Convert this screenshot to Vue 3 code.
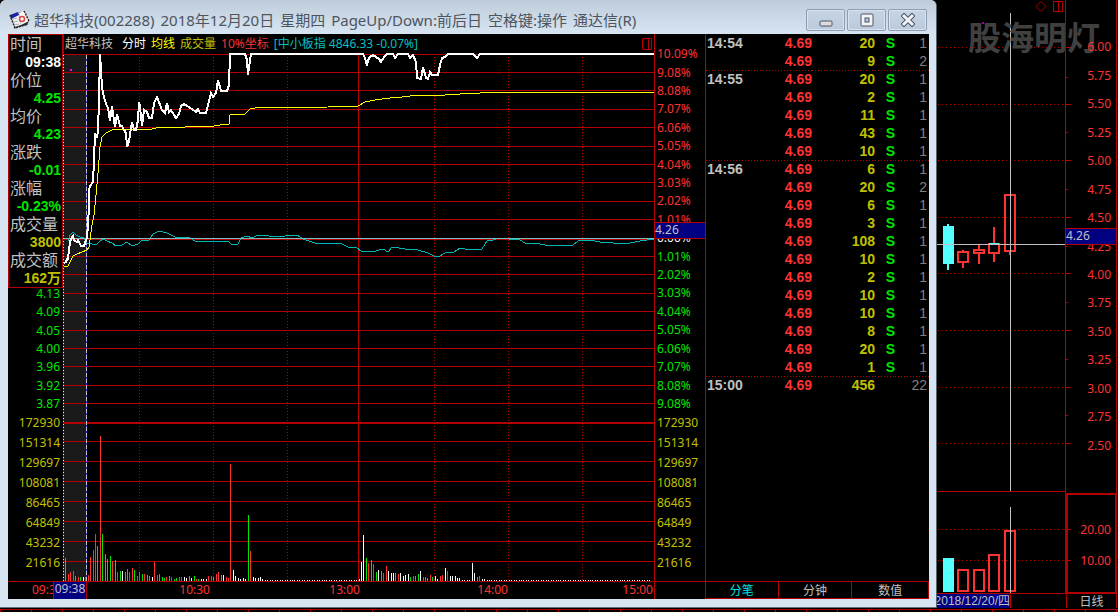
<script setup>
const titleParts = ['超华科技(002288)', '2018年12月20日', '星期四', 'PageUp/Down:前后日', '空格键:操作', '通达信(R)']
const info = [
  ['时间', '09:38', 'white'],
  ['价位', '4.25', 'green'],
  ['均价', '4.23', 'green'],
  ['涨跌', '-0.01', 'green'],
  ['涨幅', '-0.23%', 'green'],
  ['成交量', '3800', 'olive'],
  ['成交额', '162万', 'olive'],
]
const prices = ['4.13', '4.09', '4.05', '4.00', '3.96', '3.92', '3.87']
const volumes = ['172930', '151314', '129697', '108081', '86465', '64849', '43232', '21616']
const gains = ['10.09%', '9.08%', '8.08%', '7.07%', '6.06%', '5.05%', '4.04%', '3.03%', '2.02%', '1.01%']
const losses = ['1.01%', '2.02%', '3.03%', '4.04%', '5.05%', '6.06%', '7.07%', '8.08%', '9.08%']
const scale = [
  ...gains.map((text) => ({ text, tone: 'red' })),
  { text: '0.00%', tone: 'white' },
  ...losses.map((text) => ({ text, tone: 'green' })),
]

const priceRows = [54, 72, 90, 109, 127, 146, 164, 182, 201, 219, 239, 256, 274, 293, 311, 330, 348, 366, 385, 403]
const volumeRows = [441, 461, 481, 501, 521, 541, 561, 581]
const dottedCols = [139, 213, 287, 434, 508, 582]

const priceLine = '64,263 66,262 67,259 68,259 69,250 70,242 71,239 73,236 74,240 75,241 77,242 78,240 80,244 81,246 84,246 85,243 86,240 87,238 88,225 89,205 89,190 90,186 93,182 94,160 95,133 97,138 98,130 99,100 100,54 101,70 102,87 104,97 106,104 108,108 110,121 112,106 114,121 115,127 117,114 119,122 120,126 122,126 124,130 126,133 127,147 129,141 131,128 132,122 134,130 136,130 138,120 139,102 140,107 142,126 144,110 147,112 149,118 152,118 154,103 157,97 159,102 162,110 165,113 167,103 169,112 171,110 174,115 176,118 179,114 181,106 184,104 187,106 192,109 196,112 198,109 200,113 206,113 208,105 211,93 213,97 216,93 218,80 221,91 227,91 229,85 230,54 245,54 247,60 248,75 250,60 251,54 363,54 365,58 367,66 368,60 370,57 373,55 376,57 379,59 381,62 384,57 387,54 393,54 395,58 398,54 408,54 410,58 413,55 416,62 417,78 421,79 423,67 426,78 428,79 430,72 432,75 438,75 440,65 442,58 445,57 448,54 473,54 477,58 480,54 654,54'
const averageLine = '64,266 68,266 70,262 73,256 77,254 82,252 87,250 89,247 90,240 92,225 94,215 96,195 98,173 100,147 102,137 106,133 112,130 120,129 135,130 152,129 160,127 185,127 214,126 220,125 229,124 230,115 245,114 250,109 255,108 328,107 358,106 365,102 375,100 390,98 402,97 418,95 445,95 460,94 480,93 485,92 654,92'
const indexLine = '68,241 70,235 73,232 76,235 80,237 84,238 87,243 92,244 96,245 100,241 103,239 107,241 112,243 116,246 122,245 127,242 132,246 138,244 142,240 149,240 153,234 159,231 167,233 175,237 190,238 195,241 220,241 229,242 232,245 238,244 241,238 247,236 252,238 258,235 280,237 290,235 297,235 303,239 315,243 340,243 348,247 357,248 361,251 372,252 383,249 388,252 392,247 405,249 418,250 428,253 434,256 440,256 445,253 454,252 460,248 470,250 482,249 487,241 493,240 498,238 520,240 525,243 540,244 550,246 573,245 578,241 590,240 600,242 625,244 640,241 654,239'

const quiet = (count) => Array(count).fill('w1').join(' ')
const minuteVolumes = [
  'g23 r7 r9 r10 g5 r4 g4 w4 r4 r6 r24 r31 r47 g35 r145 g47 g27 g22 g25 r20 g21 r9 g10 w10 g9 g12 r9 r13 g11 r5',
  'r9 g7 r7 g6 g5 w4 r19 r6 g7 g4 g3 r4 g5 r4 g2 g3 r4 r4 w4 w3 g5 w3 g5 r2 g2 w2 w2 w2 r5 r5',
  'g4 r7 r9 g6 w6 r4 r3 r117 w11 w5 w3 w2 w3 w2 g66 r30 w4 w3 w3 w4 w2',
  quiet(38),
  'w2 w19 w46 g23 r18 g21 r17 g9 w11 g10 r8 r15 w10 w8 w8 g8 r7 w8 w5 w6 w7 g4 r5 g5 g7 w10 r4 g4 g3 r6 g4',
  'w5 w2 r5 r6 w13 r10 w5 w5 w5 w3 w3 w1 w1 w1 w1 w18 w8 g4 r5 w2 w2',
  quiet(67),
].join(' ').split(' ')
const barColors = { r: '#ff3232', g: '#00e600', w: '#ffffff' }
const bars = minuteVolumes.map((code, i) => ({
  x: Math.round(63 + (i + 1) * 2.4625),
  h: Number(code.slice(1)),
  fill: barColors[code[0]],
}))

const deals = [
  ['14:54', 20, 'S', 1], ['', 9, 'S', 2],
  ['14:55', 20, 'S', 1], ['', 2, 'S', 1], ['', 11, 'S', 1], ['', 43, 'S', 1], ['', 10, 'S', 1],
  ['14:56', 6, 'S', 1], ['', 20, 'S', 2], ['', 6, 'S', 1], ['', 3, 'S', 1], ['', 108, 'S', 1],
  ['', 10, 'S', 1], ['', 2, 'S', 1], ['', 10, 'S', 1], ['', 10, 'S', 1], ['', 8, 'S', 1],
  ['', 20, 'S', 1], ['', 1, 'S', 1],
  ['15:00', 456, '', 22],
]

const dayScale = ['6.00', '5.75', '5.50', '5.25', '5.00', '4.75', '4.50', '4.25', '4.00', '3.75', '3.50', '3.25', '3.00', '2.75', '2.50']
const dayRows = [47, 104, 160, 217, 273, 330, 387, 443, 529, 560]
const dayTicks = [77, 132, 189, 246, 302, 359, 415, 545]
const candles = [
  { x: 958, top: 251, bottom: 263, high: 250, low: 268, vol: 569 },
  { x: 974, top: 249, bottom: 254, high: 245, low: 264, vol: 569 },
  { x: 989, top: 243, bottom: 254, high: 227, low: 262, vol: 554 },
  { x: 1005, top: 194, bottom: 252, high: 194, low: 255, vol: 530 },
]
</script>

<template>
  <main class="screen">
    <section class="window">
      <header class="titlebar">
        <svg class="app-icon" width="22" height="20" viewBox="0 0 22 20">
          <path d="M1 5L13 2L20 11L18 15L6 18Z" fill="#30303a" />
          <path d="M1 5L10 3L12 15L6 17Z" fill="#f4f2ef" />
          <path d="M10 3L15 1L20 11L12 15Z" fill="#fff8f3" />
          <path d="M1 5L9 2L10 5L2 9Z" fill="#1724a5" />
          <path d="M4 9L8 8M5 12L9 11M6 15L10 14" stroke="#a8b0bb" />
          <circle cx="13" cy="9" r="2.5" fill="none" stroke="#dc4545" stroke-width="1.5" />
          <path d="M1 5L6 18L19 14M15 1L20 11" fill="none" stroke="#292929" stroke-width="1.5" stroke-dasharray="2 1" />
        </svg>
        <h1><span v-for="part in titleParts" :key="part">{{ part }}</span></h1>
        <div class="controls">
          <button type="button" aria-label="最小化">
            <svg width="14" height="14" viewBox="0 0 14 14"><rect x="1" y="8" width="12" height="5" rx="1" fill="#ddd" stroke="#4e5568" /></svg>
          </button>
          <button type="button" aria-label="最大化">
            <svg width="14" height="14" viewBox="0 0 14 14"><rect x="1" y="1" width="12" height="12" rx="1" fill="#f1f2f3" stroke="#4e5568" /><rect x="5" y="5" width="4" height="4" fill="#b9c9dc" stroke="#4e5568" /></svg>
          </button>
          <button type="button" aria-label="关闭">
            <svg width="14" height="14" viewBox="0 0 14 14"><path d="M3 3L11 11M11 3L3 11" stroke="#4e5568" stroke-width="5" stroke-linecap="square" /><path d="M3 3L11 11M11 3L3 11" stroke="#f1f2f3" stroke-width="3" stroke-linecap="square" /></svg>
          </button>
        </div>
      </header>

      <div class="body">
        <aside class="left">
          <dl class="info">
            <template v-for="row in info" :key="row[0]">
              <dt>{{ row[0] }}</dt>
              <dd :class="row[2]">{{ row[1] }}</dd>
            </template>
          </dl>
          <ul class="labels price green"><li v-for="p in prices" :key="p">{{ p }}</li></ul>
          <ul class="labels volume olive"><li v-for="v in volumes" :key="v">{{ v }}</li></ul>
          <div class="foot start">09:30</div>
        </aside>

        <section class="chart">
          <div class="legend">
            <span class="grey name">超华科技</span>
            <span class="white">分时</span>
            <span class="yellow">均线</span>
            <span class="olive">成交量</span>
            <span class="red">10%坐标</span>
            <span class="cyan">[中小板指 4846.33 -0.07%]</span>
            <svg class="pane-icon" width="10" height="12" viewBox="0 0 10 12"><path d="M.5 .5H9.5V11.5H.5ZM6.5 .5V11.5" fill="none" stroke="#b40000" /></svg>
          </div>
          <svg class="plot" viewBox="63 54 592 528" preserveAspectRatio="none" shape-rendering="crispEdges">
            <rect x="64" y="54" width="22" height="527" fill="#1a1a1a" />
            <g fill="#b40000">
              <rect v-for="y in priceRows" :key="y" x="64" :y="y" width="590" height="1" />
              <rect x="64" y="422" width="590" height="2" />
              <rect v-for="y in volumeRows" :key="y" x="63" :y="y" width="592" height="1" />
              <rect x="358" y="54" width="1" height="527" />
              <rect x="654" y="34" width="1" height="565" />
            </g>
            <path v-for="x in dottedCols" :key="x" :d="`M${x + 0.5} 57V581`" stroke="#b40000" stroke-dasharray="1 2" />
            <path d="M63.5 34V581" stroke="#b40000" />
            <path d="M63.5 55V581" stroke="#ffff32" stroke-dasharray="1 2" />
            <path d="M86.5 55V581" stroke="#3232c8" />
            <path d="M86.5 55V581" stroke="#c0c0c0" stroke-dasharray="4 2" />
            <rect x="70" y="69" width="2" height="2" fill="#ff00ff" />
            <rect v-for="b in bars" :key="b.x" :x="b.x" :y="581 - b.h" width="1" :height="b.h" :fill="b.fill" />
            <polyline :points="indexLine" fill="none" stroke="#00b8b8" />
            <rect x="64" y="238" width="590" height="1" fill="#78bebe" />
            <polyline :points="averageLine" fill="none" stroke="#ffff00" />
            <polyline :points="priceLine" fill="none" stroke="#ffffff" stroke-width="2" />
          </svg>
          <div class="foot times red">
            <span>10:30</span><span>13:00</span><span>14:00</span><span class="close">15:00</span>
            <b class="cursor-time">09:38</b>
          </div>
        </section>

        <aside class="right">
          <ul class="labels percent"><li v-for="(s, i) in scale" :key="i" :class="s.tone">{{ s.text }}</li></ul>
          <ul class="labels volume olive"><li v-for="v in volumes" :key="v">{{ v }}</li></ul>
          <div class="foot"></div>
          <b class="cursor-price">4.26</b>
        </aside>

        <section class="deals">
          <table>
            <tbody>
              <tr v-for="(d, i) in deals" :key="i" :class="{ minute: d[0] && i }">
                <td class="time grey">{{ d[0] }}</td>
                <td class="cost red">4.69</td>
                <td class="amount olive">{{ d[1] }}</td>
                <td class="side green">{{ d[2] }}</td>
                <td class="count">{{ d[3] }}</td>
              </tr>
            </tbody>
          </table>
          <nav class="tabs">
            <button type="button" class="active">分笔</button>
            <button type="button">分钟</button>
            <button type="button">数值</button>
          </nav>
        </section>
      </div>
    </section>

    <section class="daily">
      <div class="watermark">股海明灯</div>
      <svg class="candles" viewBox="937 0 130 594" preserveAspectRatio="none" shape-rendering="crispEdges">
        <g stroke="#b40000" fill="none">
          <path v-for="y in dayRows" :key="y" :d="`M938 ${y + 0.5}H1065`" stroke-dasharray="1 3" />
          <path v-for="y in dayRows" :key="'t' + y" :d="`M1065 ${y + 0.5}H1071`" />
          <path v-for="y in dayTicks" :key="y" :d="`M1065 ${y + 0.5}H1068`" />
          <path d="M1065.5 0V594M937 491.5H1066M937 593.5H1066" />
          <path d="M1036 6.5L1041 1.5L1046 6.5L1041 11.5Z" shape-rendering="auto" />
          <path d="M1053.5 1.5H1062.5V11.5H1053.5ZM1058.5 1.5V11.5" />
        </g>
        <rect x="982" y="22" width="2" height="2" fill="#a000a0" />
        <g fill="#54ffff">
          <rect x="943" y="226" width="11" height="38" />
          <rect x="947" y="224" width="2" height="46" />
          <rect x="943" y="558" width="11" height="34" />
        </g>
        <g v-for="c in candles" :key="c.x" fill="none" stroke="#ff3232" stroke-width="2">
          <path :d="`M${c.x + 5} ${c.high}V${c.top}M${c.x + 5} ${c.bottom}V${c.low}`" />
          <rect :x="c.x" :y="c.top + 1" width="10" :height="c.bottom - c.top - 2" />
          <rect :x="c.x" :y="c.vol + 1" width="10" :height="590 - c.vol" />
        </g>
        <path d="M989 243.5H999M1010.5 252V255" stroke="#54ffff" />
        <path d="M1010.5 13V491M1010.5 507V593M937 244.5H1065" stroke="#c0c0c0" />
      </svg>
      <div class="day-axis red">
        <ul class="day-prices"><li v-for="d in dayScale" :key="d">{{ d }}</li></ul>
        <ul class="day-volumes"><li>20.00</li><li>10.00</li></ul>
        <b class="day-cursor">4.26</b>
      </div>
      <div class="date-cell"><b>2018/12/20/四</b></div>
      <div class="period">日线</div>
    </section>
    <footer class="strip"></footer>
  </main>
</template>

<style>
html, body { margin: 0; background: #000; }
</style>

<style scoped>
.screen {
  display: grid;
  grid-template-columns: minmax(0, 1fr) 181px;
  grid-template-rows: minmax(0, 1fr) 4px;
  min-height: 100vh;
  background: #000;
  font: 12px/18px "Noto Sans", "Noto Sans CJK SC", sans-serif;
  color: #c0c0c0;
  overflow: hidden;
}
ul, dl, dd, h1 { margin: 0; padding: 0; }
ul { list-style: none; }
b { font-weight: 400; }
.white { color: #fff; }
.grey { color: #c0c0c0; }
.green { color: #00e600; }
.olive { color: #c0c000; }
.yellow { color: #ffff00; }
.red { color: #ff3232; }
.cyan { color: #00c0c0; }

.window {
  display: flex;
  flex-direction: column;
  box-sizing: border-box;
  min-width: 0;
  padding: 0 7px 8px 8px;
  border-bottom: 1px solid #666e76;
  border-right: 1px solid #59636d;
  border-radius: 6px 6px 0 0;
  background: #d7e4f1;
}
.titlebar {
  display: flex;
  align-items: center;
  height: 34px;
  margin: 0 -7px 0 -8px;
  padding: 0 9px;
  border-radius: 6px 6px 0 0;
  background: linear-gradient(#bfcddb, #d7e4f1);
}
.app-icon { flex: none; margin: 5px 3px 0 0; }
h1 {
  display: flex;
  gap: 6px;
  flex: 1;
  overflow: hidden;
  padding-top: 6px;
  font: 400 15px/22px "Noto Sans", "Noto Sans CJK SC", sans-serif;
  color: #4c5560;
  white-space: nowrap;
}
.controls { display: flex; gap: 2px; padding-top: 6px; }
.controls button {
  display: flex;
  align-items: center;
  justify-content: center;
  width: 39px;
  height: 22px;
  padding: 0;
  border: 1px solid #8c9db4;
  border-radius: 2px;
  background: linear-gradient(#c6d4e3, #bccbdc);
  box-shadow: inset 0 0 0 1px #d8e3ee;
}

.body {
  flex: 1;
  display: grid;
  grid-template-columns: 55px minmax(0, 1fr) 51px 223px;
  background: #000;
}
.left, .right, .chart, .deals { display: flex; flex-direction: column; min-width: 0; }
.info {
  border: 1px solid #b40000;
  box-sizing: border-box;
  height: 254px;
  flex: none;
}
.info dt { height: 18px; padding-left: 1px; font-size: 16px; }
.info dd {
  height: 18px;
  padding-right: 1px;
  font: 700 14px/18px "Liberation Sans", "Noto Sans CJK SC", sans-serif;
  text-align: right;
}
.labels { display: flex; flex-direction: column; }
.labels li { flex: 1; display: flex; align-items: center; }
.left .labels li { justify-content: flex-end; padding-right: 3px; }
.price { flex: 128; margin-top: -3px; }
.volume { flex: 160; margin-bottom: 8px; }
.foot { flex: none; height: 18px; box-sizing: border-box; }
.start { padding-left: 24px; color: #ff3232; border-top: 1px solid #b40000; line-height: 16px; }

.legend { display: flex; align-items: center; gap: 5px; height: 20px; padding-left: 2px; white-space: nowrap; }
.name { margin-right: 4px; }
.pane-icon { margin: 0 3px 0 auto; }
.plot { display: block; flex: 1; width: 100%; height: 0; min-height: 0; overflow: visible; }
.times {
  position: relative;
  display: grid;
  grid-template-columns: 147fr 150fr 148fr 147fr;
  line-height: 16px;
  height: 17px;
  text-align: right;
}
.close { padding-right: 2px; }
.cursor-time {
  position: absolute;
  left: -10px;
  top: 0;
  width: 34px;
  height: 17px;
  border: solid #b40000;
  border-width: 0 1px;
  box-sizing: border-box;
  background: #000080;
  color: #c0c0c0;
  text-align: center;
  line-height: 14px;
}

.right { position: relative; padding-left: 2px; border-right: 1px solid #b40000; box-sizing: border-box; }
.percent { flex: 368; margin-top: 11px; }
.right .foot { border-top: 1px solid #b40000; margin-left: -2px; }
.cursor-price, .day-cursor {
  position: absolute;
  left: -1px;
  right: -1px;
  top: 188px;
  height: 15px;
  border: 1px solid #b40000;
  background: #000080;
  color: #c0c0c0;
  line-height: 14px;
}

table { width: 100%; border-collapse: collapse; font: 700 14px/18px "Liberation Sans", sans-serif; table-layout: fixed; }
td { height: 18px; padding: 0; text-align: right; }
.minute td { background: repeating-linear-gradient(90deg, #b40000 0 1px, transparent 1px 3px) top / 100% 1px no-repeat; }
.time { width: 38px; text-align: left; padding-left: 1px; }
.cost { width: 67px; }
.amount { width: 63px; }
.side { width: 20px; }
.count { color: #808080; font-weight: 400; padding-right: 2px; }
.tabs { display: grid; grid-template-columns: 72fr 74fr 77fr; margin-top: auto; height: 18px; border: solid #b40000; border-width: 1px 1px 1px 0; box-sizing: border-box; }
.tabs button {
  padding: 0;
  border: 0;
  background: none;
  color: #c0c0c0;
  font: 12px/16px "Noto Sans CJK SC", sans-serif;
}
.tabs button + button { border-left: 1px solid #b40000; }
.tabs .active { color: #00e0e0; }

.daily {
  position: relative;
  display: grid;
  grid-template-columns: 129px 1fr;
  grid-template-rows: minmax(0, 1fr) 14px;
}
.candles { width: 130px; height: 0; min-height: 100%; overflow: visible; }
.watermark {
  position: absolute;
  left: 31px;
  top: 12px;
  font: 700 33px/48px "Noto Sans CJK SC", sans-serif;
  color: #404040;
  white-space: nowrap;
}
.day-axis { position: relative; display: flex; flex-direction: column; border-right: 1px solid #b40000; margin-right: 1px; text-align: right; }
.day-prices { display: flex; flex-direction: column; flex: 425; margin: 33px 5px 33px 0; }
.day-prices li { flex: 1; display: flex; align-items: center; justify-content: flex-end; }
.day-volumes { display: flex; flex-direction: column; justify-content: center; gap: 13px; height: 94px; padding: 3px 4px 0 0; border: 2px solid #b40000; border-right-width: 1px; box-sizing: content-box; }
.day-cursor { left: -1px; right: -1px; top: 228px; text-align: left; }
.date-cell { display: flex; justify-content: flex-end; width: 74px; overflow: hidden; box-sizing: border-box; background: #000080; border-right: 1px solid #b40000; font: 12px/15px "Liberation Sans", "Noto Sans CJK SC", sans-serif; }
.date-cell b { flex: none; }
.period { text-align: center; line-height: 15px; border: solid #b40000; border-width: 0 1px; margin-right: 1px; }
.strip { grid-column: 1 / 3; border-top: 1px solid #b40000; margin-top: 1px; background: repeating-linear-gradient(90deg, #b40000 0 1px, #000 1px 31px); }
</style>
